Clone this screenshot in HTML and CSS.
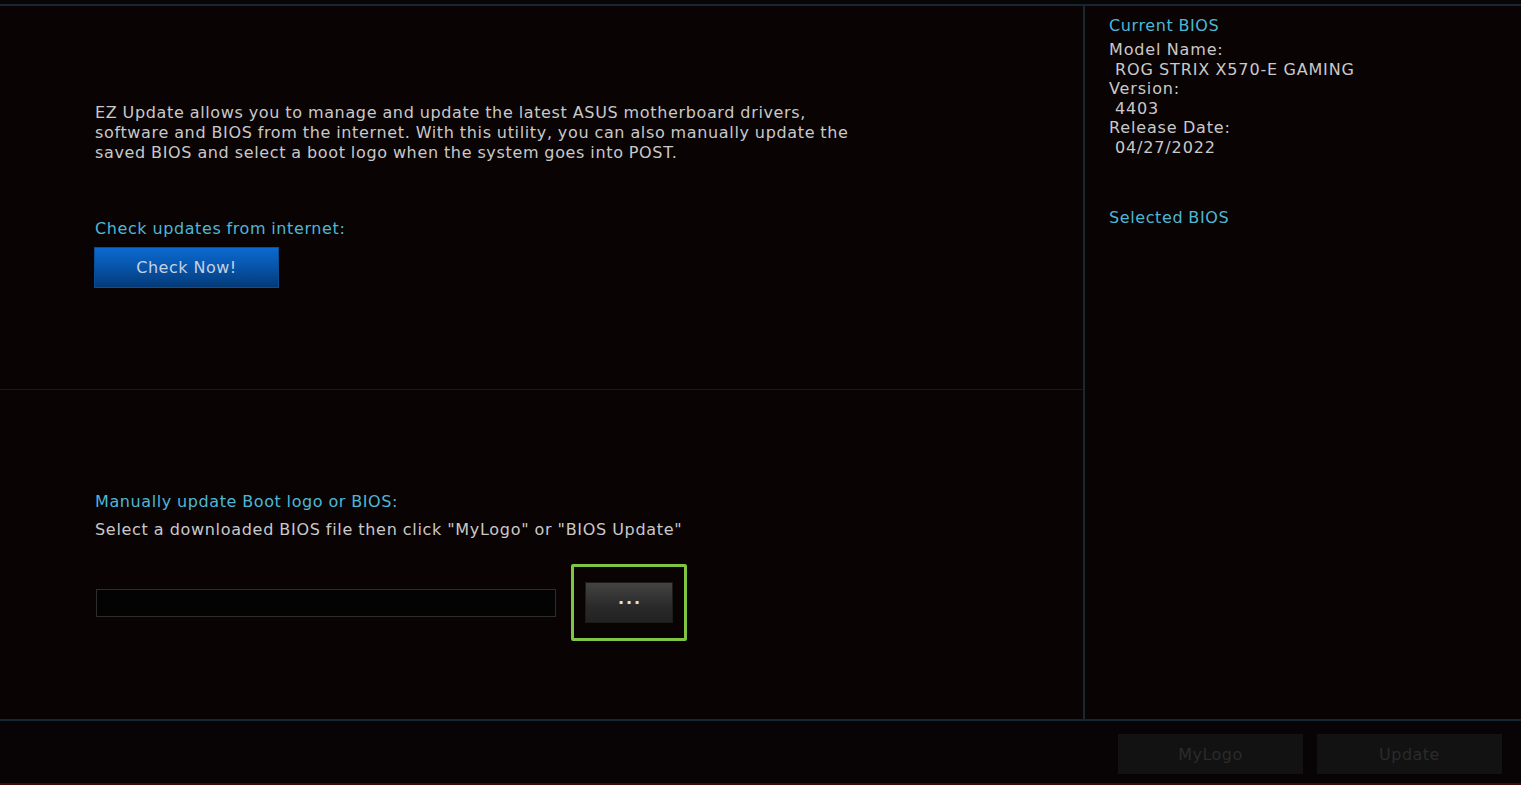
FILE: index.html
```html
<!DOCTYPE html>
<html lang="en">
<head>
<meta charset="utf-8">
<title>EZ Update</title>
<link rel="stylesheet" href="styles.css">
</head>
<body>
<div class="app">
  <div class="topstrip"></div>
  <div class="main">
    <div class="left">
      <section class="sec sec-online">
        <p class="desc">EZ Update allows you to manage and update the latest ASUS motherboard drivers,<br>software and BIOS from the internet. With this utility, you can also manually update the<br>saved BIOS and select a boot logo when the system goes into POST.</p>
        <h2 class="head head-check">Check updates from internet:</h2>
        <button class="btn-check">Check Now!</button>
      </section>
      <section class="sec sec-manual">
        <h2 class="head">Manually update Boot logo or BIOS:</h2>
        <p class="hint">Select a downloaded BIOS file then click "MyLogo" or "BIOS Update"</p>
        <div class="filerow">
          <div class="filebox"></div>
          <div class="highlight"><button class="btn-browse">&middot;&middot;&middot;</button></div>
        </div>
      </section>
    </div>
    <aside class="right">
      <h2 class="head head-cur">Current BIOS</h2>
      <div class="info">
        <div>Model Name:</div>
        <div class="val">ROG STRIX X570-E GAMING</div>
        <div>Version:</div>
        <div class="val">4403</div>
        <div>Release Date:</div>
        <div class="val">04/27/2022</div>
      </div>
      <h2 class="head head-sel">Selected BIOS</h2>
    </aside>
  </div>
  <div class="bottombar">
    <button class="btn-dis">MyLogo</button>
    <button class="btn-dis">Update</button>
  </div>
</div>
</body>
</html>
```

FILE: styles.css
```css
html, body {
  margin: 0;
  padding: 0;
  background: #0a0304;
  font-family: "DejaVu Sans", Verdana, sans-serif;
  font-size: 15px;
  color: #c9c9c9;
}
.app {
  width: 1521px;
  height: 785px;
  display: flex;
  flex-direction: column;
  overflow: hidden;
}
.topstrip {
  height: 4px;
  background: #060606;
  border-bottom: 2px solid #1a2433;
  flex: none;
}
.main {
  flex: 1;
  display: flex;
  min-height: 0;
}
.left {
  width: 1083px;
  display: flex;
  flex-direction: column;
  flex: none;
}
.sec-online {
  height: 384px;
  border-bottom: 1px solid #161b23;
  padding: 97px 0 0 95px;
  box-sizing: border-box;
  flex: none;
}
.sec-manual {
  flex: 1;
  padding: 102px 0 0 95px;
}
.desc {
  margin: 0;
  font-size: 16px;
  line-height: 20px;
  letter-spacing: 0.65px;
  word-spacing: -0.5px;
}
.head {
  margin: 0;
  font-size: 16px;
  font-weight: normal;
  color: #4db7d6;
  line-height: 20px;
  letter-spacing: 0.6px;
  word-spacing: -0.5px;
}
.head-check {
  margin-top: 56px;
}
.btn-check {
  display: block;
  margin: 8px 0 0 -1px;
  width: 185px;
  height: 41px;
  border: 1px solid #0a4f96;
  background: linear-gradient(#0a6ad0, #0856ad 45%, #033a78);
  color: #c4d2e4;
  font-family: inherit;
  font-size: 16px;
  letter-spacing: 0.5px;
  padding: 0;
}
.hint {
  margin: 8px 0 0;
  font-size: 16px;
  line-height: 20px;
  letter-spacing: 0.7px;
  word-spacing: -0.5px;
}
.filerow {
  display: flex;
  align-items: center;
  margin-top: 24px;
}
.filebox {
  width: 458px;
  height: 26px;
  border: 1px solid #2d2d2d;
  background: #030303;
  margin-left: 1px;
}
.highlight {
  margin-left: 15px;
  width: 110px;
  height: 71px;
  border: 3px solid #80c444;
  border-radius: 2px;
  display: flex;
  align-items: center;
  justify-content: center;
}
.btn-browse {
  width: 88px;
  height: 41px;
  border: 1px solid #1c1c1c;
  background: linear-gradient(#434343, #2a2a2a 60%, #222);
  color: #e0e0e0;
  font-family: inherit;
  font-size: 16px;
  font-weight: bold;
  letter-spacing: 2px;
  padding: 0 0 0 2px;
}
.right {
  flex: 1;
  border-left: 2px solid #1b2830;
  padding: 10px 0 0 24px;
}
.head-cur {
  margin-bottom: 4px;
}
.info {
  font-size: 16px;
  line-height: 19.6px;
  letter-spacing: 0.85px;
  word-spacing: -0.5px;
}
.info .val {
  padding-left: 6px;
}
.head-sel {
  margin-top: 50px;
}
.bottombar {
  flex: none;
  height: 66px;
  border-top: 2px solid #0f2834;
  border-bottom: 2px solid #3a0b0b;
  box-sizing: border-box;
  display: flex;
  justify-content: flex-end;
  align-items: flex-start;
  gap: 14px;
  padding: 13px 19px 0 0;
  background: #080304;
}
.btn-dis {
  width: 185px;
  height: 40px;
  border: none;
  background: #121212;
  color: #2b2b2b;
  font-family: inherit;
  font-size: 16px;
  letter-spacing: 0.5px;
  padding: 0;
}
```
